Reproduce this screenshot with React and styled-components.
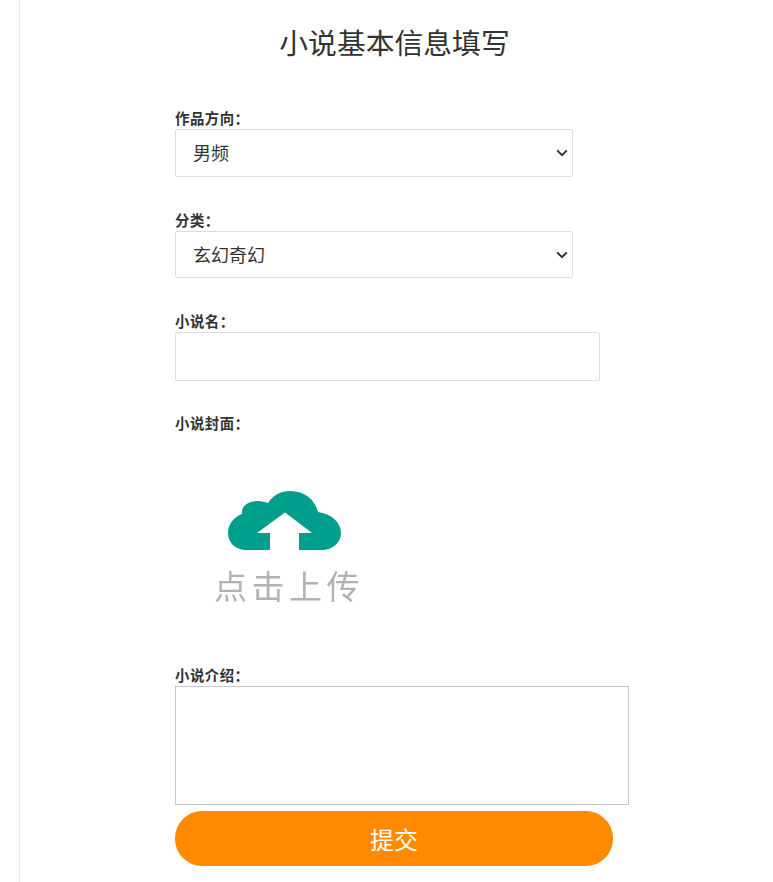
import React from 'react'
import styled, { createGlobalStyle } from "styled-components";

const GlobalStyle = createGlobalStyle`
    html, body {
        margin: 0;
        padding: 0;
        background: #fff;
    }
    body {
        font-family: "Liberation Sans", "Noto Sans CJK SC", sans-serif;
        color: #333;
    }
`;

const chevron = "data:image/svg+xml,%3Csvg xmlns='http://www.w3.org/2000/svg' width='12' height='8' viewBox='0 0 12 8'%3E%3Cpath d='M1.2 1.4 L6 6.2 L10.8 1.4' fill='none' stroke='%23333' stroke-width='2'/%3E%3C/svg%3E";

const Page = styled.div`
    box-sizing: border-box;
    width: 754px;
    height: 882px;
    margin-left: 19px;
    border-left: 1px solid #e8e8e8;
    overflow: hidden;
`;

const Title = styled.h2`
    margin: 0;
    padding: 23px 4px 0 0;
    height: 110px;
    box-sizing: border-box;
    font-size: 28.8px;
    line-height: 42px;
    font-weight: 400;
    text-align: center;
    color: #333;
`;

const Form = styled.form`
    display: flex;
    flex-direction: column;
    padding-left: 155px;
`;

const FormItem = styled.div`
    display: flex;
    flex-direction: column;
    align-items: flex-start;
    margin-bottom: ${props => props.$gap || 0}px;
`;

const Label = styled.label`
    display: block;
    height: 19px;
    font-size: 14.4px;
    line-height: 18px;
    letter-spacing: 0.5px;
    font-weight: 700;
    color: #333;
`;

const Select = styled.select`
    box-sizing: border-box;
    width: 398px;
    height: ${props => props.$height}px;
    padding: 2px 0 0 17px;
    border: 1px solid #ddd;
    border-radius: 2px;
    appearance: none;
    background: #fff url("${chevron}") no-repeat right 4px center;
    font-family: inherit;
    font-size: 18px;
    color: #333;
    outline: none;
`;

const Input = styled.input`
    box-sizing: border-box;
    width: 425px;
    height: 49px;
    padding: 0 14px;
    border: 1px solid #ddd;
    border-radius: 2px;
    outline: none;
`;

const UploadBox = styled.div`
    display: flex;
    flex-direction: column;
    align-items: flex-start;
    margin: 57px 0 0 39px;
    cursor: pointer;
`;

const CloudSvg = styled.svg`
    display: block;
    width: 113px;
    height: 59px;
    margin-left: 14px;
    filter: blur(0.5px);
`;

const UploadText = styled.span`
    font-size: 33px;
    line-height: 36px;
    margin-top: 20px;
    color: #b2b2b2;
    letter-spacing: 4.5px;
    white-space: nowrap;
    filter: blur(0.7px);
`;

const TextArea = styled.textarea`
    display: block;
    box-sizing: border-box;
    width: 454px;
    height: 119px;
    border: 1px solid #c8c8c8;
    outline: none;
    resize: none;
`;

const Button = styled.button`
    width: 438px;
    height: 55px;
    margin-top: 6px;
    border: none;
    border-radius: 27px;
    background: #ff8a00;
    color: #fff;
    font-family: inherit;
    font-size: 24px;
    cursor: pointer;
`;

function CloudIcon() {
    return (
        <CloudSvg viewBox="0 0 113 59">
            <path
                fill="#009f8c"
                d="M18 59 C7 59 0 51 0 42 C0 33 6 26 14 23 C13 15 20 10 30 10 C34 10 37 11 40 12 C45 4 53 0 62 0 C77 0 87 9 90 21 C103 23 113 31 113 42 C113 52 104 59 94 59 Z"
            />
            <path fill="#fff" d="M29 42 L57 21.5 L84 42 H71 V59 H42 V42 Z" />
        </CloudSvg>
    );
}

function App() {
    return (
        <Page>
            <GlobalStyle />
            <Title>小说基本信息填写</Title>
            <Form>
                <FormItem $gap={35}>
                    <Label>作品方向：</Label>
                    <Select $height={48} defaultValue="男频">
                        <option>男频</option>
                        <option>女频</option>
                    </Select>
                </FormItem>
                <FormItem $gap={35}>
                    <Label>分类：</Label>
                    <Select $height={47} defaultValue="玄幻奇幻">
                        <option>玄幻奇幻</option>
                        <option>武侠仙侠</option>
                    </Select>
                </FormItem>
                <FormItem $gap={34}>
                    <Label>小说名：</Label>
                    <Input type="text" />
                </FormItem>
                <FormItem $gap={61}>
                    <Label>小说封面：</Label>
                    <UploadBox>
                        <CloudIcon />
                        <UploadText>点击上传</UploadText>
                    </UploadBox>
                </FormItem>
                <FormItem>
                    <Label>小说介绍：</Label>
                    <TextArea />
                </FormItem>
                <Button type="button">提交</Button>
            </Form>
        </Page>
    )
}

export default App
